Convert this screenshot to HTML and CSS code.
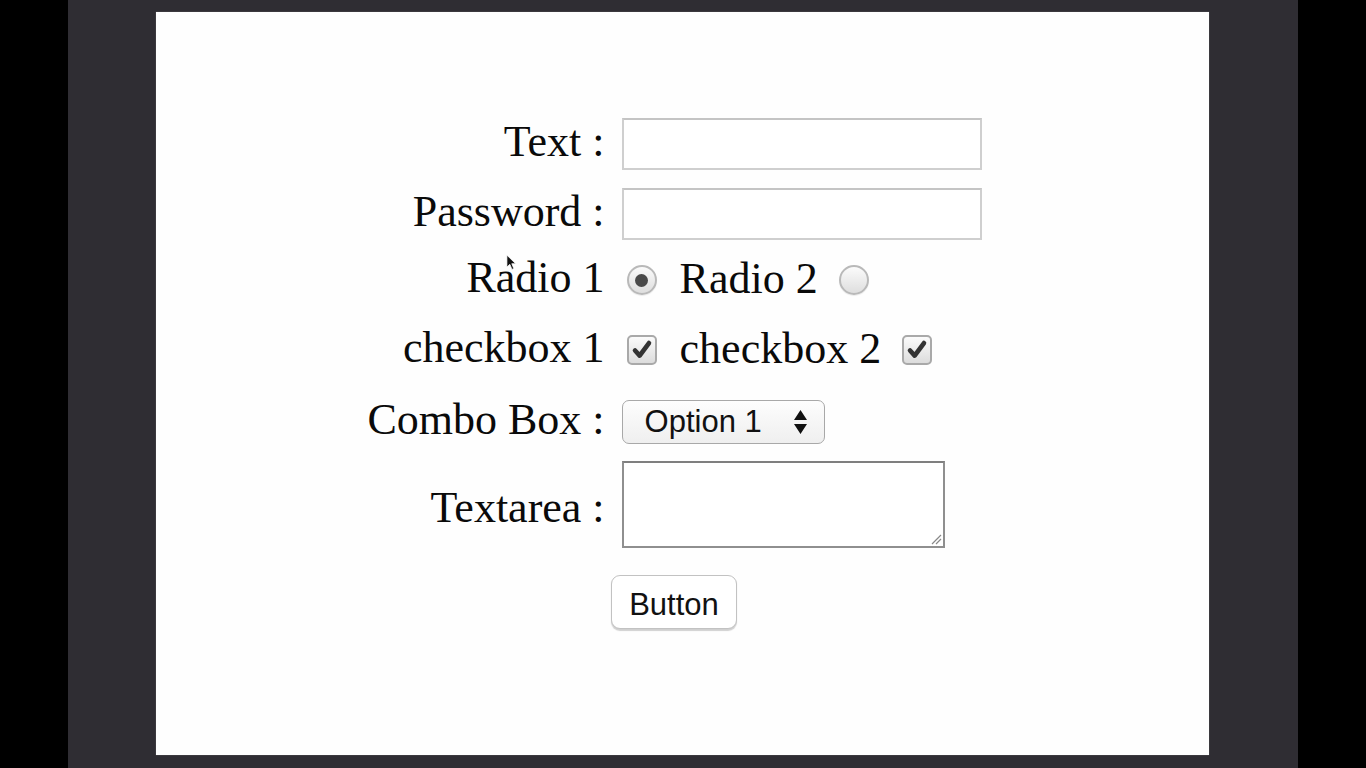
FILE: index.html
```html
<!DOCTYPE html>
<html>
<head>
<meta charset="utf-8">
<link rel="stylesheet" href="styles.css">
</head>
<body>
<div class="screen">
  <div class="frame">
    <div class="panel">
      <form class="form">
        <div class="lbl r1">Text :</div>
        <div class="ctl r1"><input class="field" type="text"></div>

        <div class="lbl r2">Password :</div>
        <div class="ctl r2"><input class="field" type="password"></div>

        <div class="lbl r3">Radio 1</div>
        <div class="ctl r3 inline">
          <span class="radio checked"><span class="dot"></span></span>
          <span class="itext">Radio 2</span>
          <span class="radio"></span>
        </div>

        <div class="lbl r4">checkbox 1</div>
        <div class="ctl r4 inline">
          <span class="check"><svg viewBox="0 0 28 28" width="28" height="28"><path d="M6.5 14.5 L11.5 20 L21.5 6.5" fill="none" stroke="#333" stroke-width="5" stroke-linecap="round" stroke-linejoin="round"/></svg></span>
          <span class="itext">checkbox 2</span>
          <span class="check"><svg viewBox="0 0 28 28" width="28" height="28"><path d="M6.5 14.5 L11.5 20 L21.5 6.5" fill="none" stroke="#333" stroke-width="5" stroke-linecap="round" stroke-linejoin="round"/></svg></span>
        </div>

        <div class="lbl r5">Combo Box :</div>
        <div class="ctl r5">
          <div class="select">
            <span class="opt">Option 1</span>
            <svg class="arrows" viewBox="0 0 14 26" width="15" height="26"><path d="M7 1 L13.5 11 L0.5 11 Z M0.5 15 L13.5 15 L7 25 Z" fill="#111"/></svg>
          </div>
        </div>

        <div class="lbl r6 talbl">Textarea :</div>
        <div class="ctl r6">
          <div class="textarea">
            <svg class="grip" viewBox="0 0 12 12" width="12" height="12"><path d="M2 11 L11 2 M6 11 L11 6" stroke="#888" stroke-width="1.2"/></svg>
          </div>
        </div>

        <div class="btnrow r7"><button type="button" class="btn">Button</button></div>
      </form>
      <svg class="cursor" viewBox="0 0 12 18" width="11" height="17"><path d="M1 1 L1 14 L4.2 11 L6.5 16.5 L8.5 15.6 L6.3 10.3 L10.5 10.3 Z" fill="#111" stroke="#fff" stroke-width="0.8"/></svg>
    </div>
  </div>
</div>
</body>
</html>
```

FILE: styles.css
```css
* { box-sizing: border-box; }
html, body { margin: 0; padding: 0; }
body { background: #000; width: 1366px; height: 768px; overflow: hidden; }

.screen {
  width: 1366px;
  height: 768px;
  padding: 0 68px;
  background: #000;
}
.frame {
  width: 1230px;
  height: 768px;
  background: #2f2d33;
  padding: 12px 89px 13px 88px;
}
.panel {
  position: relative;
  width: 1053px;
  height: 743px;
  background: #fefefe;
  box-shadow: 0 0 1px #777;
  padding-top: 106px;
}

.form {
  display: grid;
  grid-template-columns: auto auto;
  grid-template-rows: 52px 18px 52px 80px 60px 20px 44px 17px 87px 27px 54px;
  column-gap: 17px;
  width: 615px;
  margin-left: 211px;
  font-family: "Liberation Serif", "Times New Roman", serif;
  color: #0a0a0a;
}
.lbl {
  font-size: 44px;
  line-height: 1;
  text-align: right;
  align-self: center;
  white-space: nowrap;
  padding-bottom: 4px;
}
.ctl { align-self: center; display: flex; align-items: center; }
.r1 { grid-row: 1; }
.r2 { grid-row: 3; }
.r3 { grid-row: 4; }
.r4 { grid-row: 5; }
.r5 { grid-row: 7; }
.r6 { grid-row: 9; }
.r7 { grid-row: 11; }
.talbl { padding-top: 10px; }

.field {
  width: 360px;
  height: 52px;
  border: 2px solid #cfcfcf;
  border-top-color: #c4c4c4;
  background: #fff;
  margin: 0;
  padding: 0 6px;
  font-size: 28px;
  outline: none;
}

.inline { gap: 0; }
.itext {
  font-size: 44px;
  line-height: 1;
  margin: 0 16px 0 23px;
  white-space: nowrap;
  padding-bottom: 2px;
}
.radio {
  width: 30px;
  height: 30px;
  border-radius: 50%;
  border: 2px solid #b9b9b9;
  background: linear-gradient(#fbfbfb, #dedede);
  margin-left: 5px;
  display: flex;
  align-items: center;
  justify-content: center;
  box-shadow: 0 1px 1px rgba(0,0,0,0.08);
}
.radio .dot {
  width: 13px;
  height: 13px;
  border-radius: 50%;
  background: #4a4a4a;
}
.check {
  width: 30px;
  height: 30px;
  border-radius: 5px;
  border: 2px solid #a9a9a9;
  background: linear-gradient(#fbfbfb, #dcdcdc);
  margin-left: 5px;
  display: flex;
  align-items: center;
  justify-content: center;
}
.check svg { display: block; }

.select {
  width: 203px;
  height: 44px;
  border: 1.5px solid #a8a8a8;
  border-radius: 7px;
  background: linear-gradient(#fdfdfd, #efefef);
  display: flex;
  align-items: center;
  padding: 0 16px 0 22px;
  font-family: "Liberation Sans", Arial, sans-serif;
  font-size: 31px;
  color: #111;
}
.opt { flex: 1; padding-bottom: 1px; }
.arrows { display: block; }

.textarea {
  position: relative;
  width: 323px;
  height: 87px;
  border: 2px solid #8f8f8f;
  border-top-color: #7f7f7f;
  background: #fff;
}
.grip { position: absolute; right: 1px; bottom: 1px; }

.btnrow {
  grid-column: 1 / span 2;
  display: flex;
  justify-content: center;
  align-items: center;
}
.btn {
  width: 126px;
  height: 54px;
  border: 1.5px solid #c2c2c2;
  border-radius: 9px;
  background: #fff;
  box-shadow: 0 1.5px 1px rgba(0,0,0,0.18);
  font-family: "Liberation Sans", Arial, sans-serif;
  font-size: 31px;
  color: #111;
  padding: 5px 0 0 0;
  margin: 0;
  margin-left: -1px;
}

.cursor { position: absolute; left: 350px; top: 242px; }
```
